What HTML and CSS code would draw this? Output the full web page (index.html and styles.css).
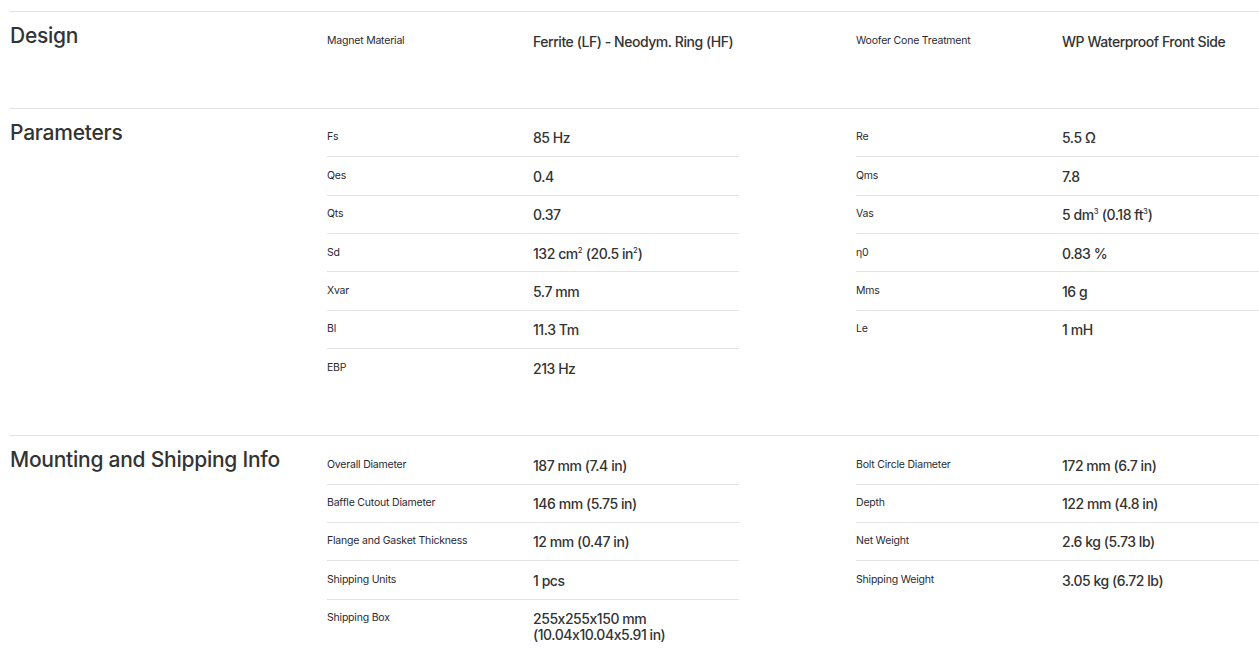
FILE: index.html
```html
<!DOCTYPE html>
<html lang="en">
<head>
<meta charset="utf-8">
<title>Specifications</title>
<link rel="stylesheet" href="styles.css">
</head>
<body>
<div class="specs">
  <section class="spec">
    <h2 class="spec-title">Design</h2>
    <div class="spec-group">
      <div class="row"><span class="label">Magnet Material</span><span class="value">Ferrite (LF) - Neodym. Ring (HF)</span></div>
    </div>
    <div class="spec-group spec-group--right">
      <div class="row"><span class="label">Woofer Cone Treatment</span><span class="value">WP Waterproof Front Side</span></div>
    </div>
  </section>

  <section class="spec">
    <h2 class="spec-title">Parameters</h2>
    <div class="spec-group">
      <div class="row"><span class="label">Fs</span><span class="value">85 Hz</span></div>
      <div class="row"><span class="label">Qes</span><span class="value">0.4</span></div>
      <div class="row"><span class="label">Qts</span><span class="value">0.37</span></div>
      <div class="row"><span class="label">Sd</span><span class="value">132 cm<sup>2</sup> (20.5 in<sup>2</sup>)</span></div>
      <div class="row"><span class="label">Xvar</span><span class="value">5.7 mm</span></div>
      <div class="row"><span class="label">Bl</span><span class="value">11.3 Tm</span></div>
      <div class="row"><span class="label">EBP</span><span class="value">213 Hz</span></div>
    </div>
    <div class="spec-group spec-group--right">
      <div class="row"><span class="label">Re</span><span class="value">5.5 Ω</span></div>
      <div class="row"><span class="label">Qms</span><span class="value">7.8</span></div>
      <div class="row"><span class="label">Vas</span><span class="value">5 dm<sup>3</sup> (0.18 ft<sup>3</sup>)</span></div>
      <div class="row"><span class="label">η0</span><span class="value">0.83 %</span></div>
      <div class="row"><span class="label">Mms</span><span class="value">16 g</span></div>
      <div class="row"><span class="label">Le</span><span class="value">1 mH</span></div>
    </div>
  </section>

  <section class="spec">
    <h2 class="spec-title">Mounting and Shipping Info</h2>
    <div class="spec-group">
      <div class="row"><span class="label">Overall Diameter</span><span class="value">187 mm (7.4 in)</span></div>
      <div class="row"><span class="label">Baffle Cutout Diameter</span><span class="value">146 mm (5.75 in)</span></div>
      <div class="row"><span class="label">Flange and Gasket Thickness</span><span class="value">12 mm (0.47 in)</span></div>
      <div class="row"><span class="label">Shipping Units</span><span class="value">1 pcs</span></div>
      <div class="row"><span class="label">Shipping Box</span><span class="value">255x255x150 mm<br>(10.04x10.04x5.91 in)</span></div>
    </div>
    <div class="spec-group spec-group--right">
      <div class="row"><span class="label">Bolt Circle Diameter</span><span class="value">172 mm (6.7 in)</span></div>
      <div class="row"><span class="label">Depth</span><span class="value">122 mm (4.8 in)</span></div>
      <div class="row"><span class="label">Net Weight</span><span class="value">2.6 kg (5.73 lb)</span></div>
      <div class="row"><span class="label">Shipping Weight</span><span class="value">3.05 kg (6.72 lb)</span></div>
    </div>
  </section>
</div>
</body>
</html>
```

FILE: styles.css
```css
html, body {
  margin: 0;
  background: #ffffff;
}

body {
  padding: 11px 0 0 10px;
  font-family: Inter, "Noto Sans", sans-serif;
  font-feature-settings: "calt" 0;
  color: #333333;
  overflow: hidden;
}

.specs {
  display: flex;
  flex-direction: column;
}

.spec {
  display: grid;
  grid-template-columns: 317px 412px 1fr;
  border-top: 1px solid #e3e3e5;
  padding: 10px 0 48.5px;
  align-items: start;
}

.spec-title {
  margin: 1px 0 0;
  font-size: 21px;
  line-height: 26px;
  font-weight: 500;
  color: #333333;
  letter-spacing: -0.25px;
}

.spec-group {
  display: flex;
  flex-direction: column;
}

.spec-group--right {
  margin-left: 117px;
}

.row {
  display: grid;
  grid-template-columns: 206px 1fr;
  align-items: start;
  padding: 11.5px 0 9.9px;
  border-bottom: 1px solid #e3e3e5;
}

.row:last-child {
  border-bottom: none;
}

.label {
  font-size: 10.5px;
  line-height: 13px;
  letter-spacing: -0.2px;
  color: #2a2a33;
}

.value {
  font-size: 14px;
  line-height: 16px;
  font-weight: 500;
  letter-spacing: -0.45px;
  color: #333333;
  white-space: nowrap;
}

.value sup {
  font-size: 0.55em;
  line-height: 0;
  letter-spacing: 0;
  vertical-align: 0.75em;
}
```
